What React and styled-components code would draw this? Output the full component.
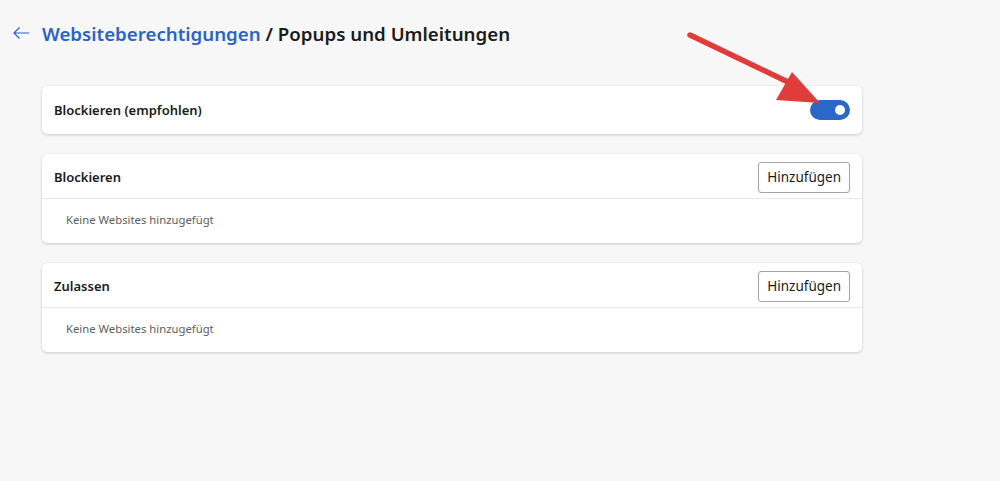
import React, { useState } from "react";
import styled, { createGlobalStyle } from "styled-components";

const GlobalStyle = createGlobalStyle`
  html, body {
    margin: 0;
    padding: 0;
    background: #f7f7f7;
  }
  body {
    font-family: "Noto Sans", "Open Sans", sans-serif;
    color: #1b1b1b;
  }
`;

const Page = styled.div`
  position: relative;
  width: 1000px;
  height: 481px;
  box-sizing: border-box;
  padding: 20px 138px 0 12px;
`;

const Header = styled.div`
  display: flex;
  align-items: center;
  height: 26px;
  margin-bottom: 40px;
`;

const BackButton = styled.button`
  display: flex;
  align-items: center;
  justify-content: center;
  width: 18px;
  height: 26px;
  padding: 0;
  margin-right: 12px;
  border: none;
  background: none;
  cursor: pointer;
`;

const Title = styled.h1`
  margin: 0;
  font-size: 18.7px;
  font-weight: 600;
  white-space: nowrap;
`;

const Crumb = styled.a`
  color: #2b63c6;
  text-decoration: none;
`;

const Content = styled.div`
  display: flex;
  flex-direction: column;
  gap: 20px;
  margin-left: 30px;
`;

const Card = styled.section`
  background: #ffffff;
  border-radius: 5px;
  box-shadow: 0 1px 3px rgba(0, 0, 0, 0.18), 0 0 1px rgba(0, 0, 0, 0.08);
`;

const Row = styled.div`
  display: flex;
  align-items: center;
  justify-content: space-between;
  height: ${(p) => p.$height}px;
  padding: ${(p) => (p.$divider ? "2px 12px 0" : "0 12px")};
  box-sizing: border-box;
  border-bottom: ${(p) => (p.$divider ? "1px solid #e8e8e8" : "none")};
`;

const Label = styled.span`
  font-size: 13px;
  font-weight: 600;
  color: #1b1b1b;
`;

const Empty = styled.div`
  display: flex;
  align-items: center;
  height: 44px;
  box-sizing: border-box;
  padding: 0 0 3px 24px;
  font-size: 11.3px;
  color: #606060;
`;

const AddButton = styled.button`
  height: 31px;
  padding: 0 8px;
  border: 1px solid #a3a3a3;
  border-radius: 3px;
  background: #ffffff;
  font-family: "Noto Sans", "Open Sans", sans-serif;
  font-size: 13.5px;
  color: #1b1b1b;
  cursor: pointer;
`;

const Switch = styled.button`
  position: relative;
  width: 40px;
  height: 20px;
  padding: 0;
  border: none;
  border-radius: 10px;
  background: ${(p) => (p.$on ? "#2b66c9" : "#8a8a8a")};
  cursor: pointer;

  &::after {
    content: "";
    position: absolute;
    top: 5px;
    left: ${(p) => (p.$on ? "25px" : "5px")};
    width: 10px;
    height: 10px;
    border-radius: 50%;
    background: #ffffff;
  }
`;

const Pointer = styled.svg`
  position: absolute;
  left: 0;
  top: 0;
  pointer-events: none;
`;

const SiteList = ({ title }) => (
  <Card>
    <Row $height={45} $divider>
      <Label>{title}</Label>
      <AddButton>Hinzufügen</AddButton>
    </Row>
    <Empty>Keine Websites hinzugefügt</Empty>
  </Card>
);

export default function App() {
  const [blocked, setBlocked] = useState(true);

  return (
    <>
      <GlobalStyle />
      <Page>
        <Header>
          <BackButton aria-label="Zurück">
            <svg width="18" height="14" viewBox="0 0 18 14">
              <path
                d="M17 7H2M7.5 1.5L2 7l5.5 5.5"
                fill="none"
                stroke="#2b63c6"
                strokeWidth="1.2"
              />
            </svg>
          </BackButton>
          <Title>
            <Crumb href="#">Websiteberechtigungen</Crumb> / Popups und Umleitungen
          </Title>
        </Header>
        <Content>
          <Card>
            <Row $height={48}>
              <Label>Blockieren (empfohlen)</Label>
              <Switch $on={blocked} onClick={() => setBlocked(!blocked)} />
            </Row>
          </Card>
          <SiteList title="Blockieren" />
          <SiteList title="Zulassen" />
        </Content>
        <Pointer width="1000" height="481">
          <line
            x1="690"
            y1="35"
            x2="790"
            y2="83"
            stroke="#e03c3c"
            strokeWidth="5.5"
            strokeLinecap="round"
          />
          <polygon points="820,103 792,72 776,100" fill="#e03c3c" />
        </Pointer>
      </Page>
    </>
  );
}
